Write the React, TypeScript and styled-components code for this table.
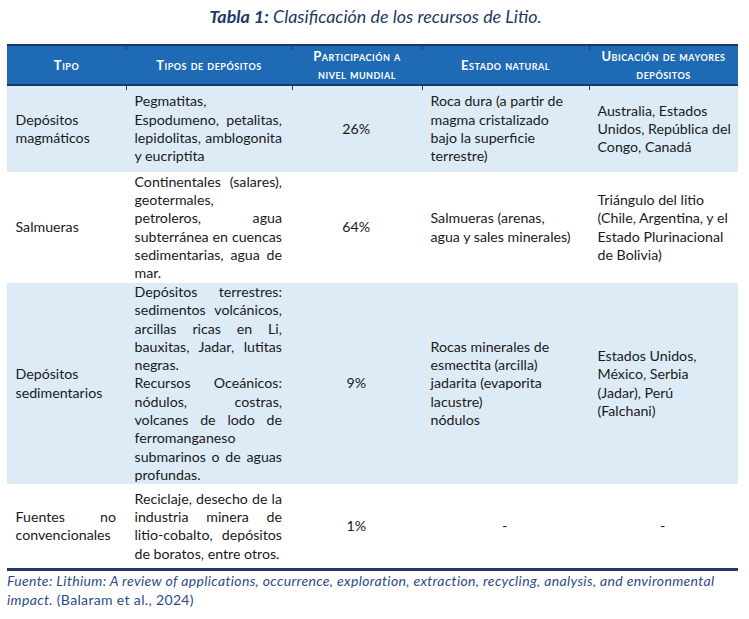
import React from "react";
import styled, { createGlobalStyle, css } from "styled-components";

const GlobalStyle = createGlobalStyle`
  html, body { margin: 0; padding: 0; background: #ffffff; }
  body { font-family: Lato, "Liberation Sans", sans-serif; color: #1a1a1a; }
`;

const COLS = "119px 166px 130px 167px 149px";
const NAVY = "#1b3768";

const Page = styled.div`
  width: 749px;
  box-sizing: border-box;
  padding: 5px 11px 0 7px;
`;

const Title = styled.h1`
  margin: 0 0 17px;
  padding-left: 6px;
  text-align: center;
  font-size: 17.9px;
  line-height: 22px;
  font-style: italic;
  font-weight: 400;
  color: #1f3864;
  b { font-weight: 700; }
`;

const Table = styled.div`
  width: 731px;
  border-bottom: 3px solid #1f3864;
`;

const HeadRow = styled.div`
  display: grid;
  grid-template-columns: ${COLS};
  height: 42px;
  box-sizing: border-box;
  border-top: 2px solid ${NAVY};
  border-bottom: 2px solid ${NAVY};
  background: #1f6ab5;
`;

const HeadCell = styled.div<{ $tick: boolean }>`
  position: relative;
  display: flex;
  flex-direction: column;
  align-items: center;
  justify-content: center;
  text-align: center;
  color: #ffffff;
  font-weight: 700;
  font-size: 13px;
  line-height: 18px;
  letter-spacing: 0.5px;
  font-variant: small-caps;
  white-space: nowrap;
  ${(p) =>
    p.$tick &&
    css`
      &::before,
      &::after {
        content: "";
        position: absolute;
        left: 0;
        width: 1px;
        height: 4px;
        background: ${NAVY};
      }
      &::before { top: 0; }
      &::after { bottom: -6px; }
    `}
`;

const BodyRow = styled.div<{ $shade: boolean; $h: number }>`
  display: grid;
  grid-template-columns: ${COLS};
  min-height: ${(p) => p.$h}px;
  background: ${(p) => (p.$shade ? "#ddebf7" : "transparent")};
`;

const Cell = styled.div<{ $center?: boolean }>`
  display: flex;
  flex-direction: column;
  justify-content: center;
  align-items: ${(p) => (p.$center ? "center" : "stretch")};
  padding: 0 10px 0 8.5px;
  font-size: 14.2px;
  line-height: 18.3px;
`;

const Line = styled.span<{ $justify: boolean }>`
  display: block;
  text-align: left;
  white-space: nowrap;
  ${(p) =>
    p.$justify &&
    css`
      white-space: normal;
      text-align: justify;
      text-align-last: justify;
    `}
`;

const Footer = styled.p`
  margin: 0;
  font-size: 14px;
  line-height: 19px;
  letter-spacing: 0.35px;
  color: #2c4b8a;
  em { font-style: italic; }
`;

type Para = { lines: string[]; justify?: boolean };
type CellData = { paras: Para[]; center?: boolean };
type RowData = { shade: boolean; h: number; cells: CellData[] };

const headers: string[][] = [
  ["Tipo"],
  ["Tipos de depósitos"],
  ["Participación a", "nivel mundial"],
  ["Estado natural"],
  ["Ubicación de mayores", "depósitos"],
];

const t = (lines: string[], justify = false): CellData => ({ paras: [{ lines, justify }] });
const c = (text: string): CellData => ({ paras: [{ lines: [text] }], center: true });

const rows: RowData[] = [
  {
    shade: true,
    h: 86,
    cells: [
      t(["Depósitos", "magmáticos"]),
      t(["Pegmatitas,", "Espodumeno, petalitas,", "lepidolitas, amblogonita", "y eucriptita"], true),
      c("26%"),
      t(["Roca dura (a partir de", "magma cristalizado", "bajo la superficie", "terrestre)"]),
      t(["Australia, Estados", "Unidos, República del", "Congo, Canadá"]),
    ],
  },
  {
    shade: false,
    h: 111,
    cells: [
      t(["Salmueras"]),
      t(
        [
          "Continentales (salares),",
          "geotermales,",
          "petroleros, agua",
          "subterránea en cuencas",
          "sedimentarias, agua de",
          "mar.",
        ],
        true
      ),
      c("64%"),
      t(["Salmueras (arenas,", "agua y sales minerales)"]),
      t(["Triángulo del litio", "(Chile, Argentina, y el", "Estado Plurinacional", "de Bolivia)"]),
    ],
  },
  {
    shade: true,
    h: 201,
    cells: [
      t(["Depósitos", "sedimentarios"]),
      {
        paras: [
          {
            lines: [
              "Depósitos terrestres:",
              "sedimentos volcánicos,",
              "arcillas ricas en Li,",
              "bauxitas, Jadar, lutitas",
              "negras.",
            ],
            justify: true,
          },
          {
            lines: [
              "Recursos Oceánicos:",
              "nódulos, costras,",
              "volcanes de lodo de",
              "ferromanganeso",
              "submarinos o de aguas",
              "profundas.",
            ],
            justify: true,
          },
        ],
      },
      c("9%"),
      t(["Rocas minerales de", "esmectita (arcilla)", "jadarita (evaporita", "lacustre)", "nódulos"]),
      t(["Estados Unidos,", "México, Serbia", "(Jadar), Perú", "(Falchani)"]),
    ],
  },
  {
    shade: false,
    h: 84,
    cells: [
      t(["Fuentes no", "convencionales"], true),
      t(["Reciclaje, desecho de la", "industria minera de", "litio-cobalto, depósitos", "de boratos, entre otros."], true),
      c("1%"),
      c("-"),
      c("-"),
    ],
  },
];

const renderCell = (cell: CellData, key: number) => (
  <Cell key={key} $center={cell.center}>
    {cell.paras.flatMap((p, pi) =>
      p.lines.map((line, li) => (
        <Line key={`${pi}-${li}`} $justify={!!p.justify && li < p.lines.length - 1}>
          {line}
        </Line>
      ))
    )}
  </Cell>
);

export default function App() {
  return (
    <>
      <GlobalStyle />
      <Page>
        <Title>
          <b>Tabla 1:</b> Clasificación de los recursos de Litio.
        </Title>
        <Table>
          <HeadRow>
            {headers.map((h, i) => (
              <HeadCell key={i} $tick={i > 0}>
                {h.map((l, j) => (
                  <span key={j}>{l}</span>
                ))}
              </HeadCell>
            ))}
          </HeadRow>
          {rows.map((r, i) => (
            <BodyRow key={i} $shade={r.shade} $h={r.h}>
              {r.cells.map(renderCell)}
            </BodyRow>
          ))}
        </Table>
        <Footer>
          <em>
            Fuente: Lithium: A review of applications, occurrence, exploration, extraction, recycling, analysis, and
            environmental
            <br />
            impact.
          </em>{" "}
          (Balaram et al., 2024)
        </Footer>
      </Page>
    </>
  );
}
